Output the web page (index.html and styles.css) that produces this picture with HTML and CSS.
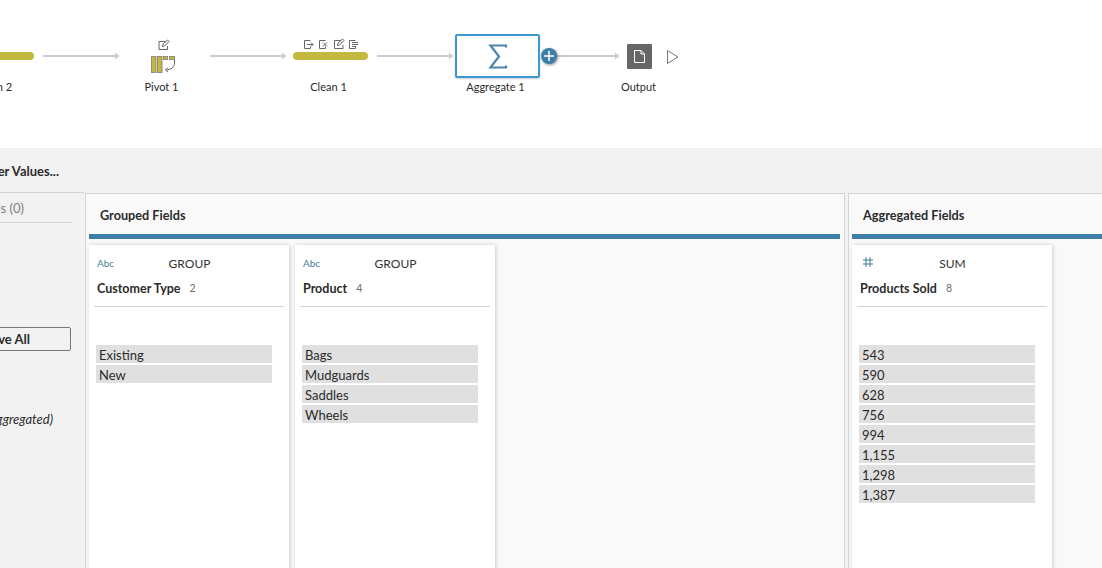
FILE: index.html
```html
<!DOCTYPE html>
<html lang="en">
<head>
<meta charset="utf-8">
<title>Aggregate 1</title>
<link rel="stylesheet" href="styles.css">
</head>
<body>
<section class="flow">
  <div class="yellow-bar bar-left"></div>
  <div class="node-label label-clip">Union 2</div>

  <svg class="canvas-lines" width="700" height="100" viewBox="0 0 700 100">
    <g class="link">
      <path d="M43 55H115V52.500L119.500 56L115 59.500V57H43z"/>
      <path d="M210 55H282V52.500L286.500 56L282 59.500V57H210z"/>
      <path d="M377 55H449V52.500L453.500 56L449 59.500V57H377z"/>
      <path d="M556 55H615V52.500L619.500 56L615 59.500V57H556z"/>
    </g>
    <g class="edit-icon">
      <path d="M165.500 41.500h-6.500v8h8.500v-3.500M162.500 46.500l.5-2.500 4.500-4 1.500 1.500-4.500 4.500z"/>
      <path d="M310.500 40.500h-6v8h6v-2M307 44.500h6M311 42.500l2 2-2 2"/>
      <path d="M325.500 40.500h-6v8h6v-2M323 42.500l4 4M327 42.500l-4 4"/>
      <path d="M340.500 40.500h-6v8h8.500v-3.500M337.500 45.500l.5-2.500 4.500-4 1.500 1.500-4.500 4.500z"/>
      <path d="M355.500 40.500h-6v8h6v-2M352 42.500h6M352 44.500h6M352 46.500h4"/>
    </g>
    <g class="pivot">
      <rect x="151.500" y="56.500" width="4.500" height="16"/>
      <rect x="157.500" y="56.500" width="4.500" height="16"/>
      <rect x="163.500" y="56.500" width="4" height="3"/>
      <rect x="169.500" y="56.500" width="5" height="3"/>
    </g>
    <path class="pivot-arrow" d="M174.500 60v3c0 4-3 6.500-8.500 7M168 67.500l-2.500 2.500 2.500 2"/>
    <path class="sigma" d="M506 47.500V45.500H490.500L499 56.500L490.500 67.500H506V65.500"/>
    <path class="play" d="M667.500 50.500V63.500L678 57z"/>
  </svg>

  <div class="node-label label-pivot">Pivot 1</div>
  <div class="yellow-bar bar-clean"></div>
  <div class="node-label label-clean">Clean 1</div>
  <div class="agg-box"></div>
  <div class="node-label label-agg">Aggregate 1</div>
  <div class="plus">
    <svg width="10" height="10" viewBox="0 0 10 10"><path d="M5 0V10M0 5H10"/></svg>
  </div>
  <div class="output">
    <svg width="11" height="13" viewBox="0 0 11 13"><path d="M.5.500H7L10.500 4V12.500H.5zM7 .5V4H10.500"/></svg>
  </div>
  <div class="node-label label-output">Output</div>
</section>

<div class="toolbar"><span class="toolbar-text">Filter Values...</span></div>

<main class="workspace">
  <aside class="side">
    <div class="side-head"><span>Additional Fields (0)</span></div>
    <button class="remove" type="button"><span>Remove All</span></button>
    <div class="side-note"><span>(Not aggregated)</span></div>
  </aside>

  <section class="panel panel-grouped">
    <h2 class="panel-title">Grouped Fields</h2>
    <div class="panel-rule"></div>
    <div class="cards">
      <article class="card">
        <div class="card-top"><span class="type">Abc</span><span class="op">GROUP</span></div>
        <div class="card-name"><b>Customer Type</b><span class="count">2</span></div>
        <div class="card-rule"></div>
        <ul class="values">
          <li>Existing</li><li>New</li>
        </ul>
      </article>
      <article class="card">
        <div class="card-top"><span class="type">Abc</span><span class="op">GROUP</span></div>
        <div class="card-name"><b>Product</b><span class="count">4</span></div>
        <div class="card-rule"></div>
        <ul class="values">
          <li>Bags</li><li>Mudguards</li><li>Saddles</li><li>Wheels</li>
        </ul>
      </article>
    </div>
  </section>

  <section class="panel panel-agg">
    <h2 class="panel-title">Aggregated Fields</h2>
    <div class="panel-rule"></div>
    <div class="cards">
      <article class="card">
        <div class="card-top">
          <svg class="type-num" width="10" height="10" viewBox="0 0 10 10"><path d="M3 0V10M7 0V10M0 3H10M0 7H10"/></svg>
          <span class="op">SUM</span>
        </div>
        <div class="card-name"><b>Products Sold</b><span class="count">8</span></div>
        <div class="card-rule"></div>
        <ul class="values">
          <li>543</li><li>590</li><li>628</li><li>756</li><li>994</li><li>1,155</li><li>1,298</li><li>1,387</li>
        </ul>
      </article>
    </div>
  </section>
</main>
</body>
</html>
```
FILE: styles.css
```css
* { box-sizing: border-box; }
html, body { margin: 0; height: 568px; overflow: hidden; }
body {
  width: 1102px;
  background: #f2f2f2;
  color: #2b2b2b;
  font-family: "Lato", "Open Sans", sans-serif;
  font-size: 13px;
}

/* flow canvas */
.flow { position: relative; height: 148px; background: #fff; overflow: hidden; }
.canvas-lines { position: absolute; left: 0; top: 0; }
.link path { fill: #ccc; }
.edit-icon path { fill: none; stroke: #666; stroke-width: 1; }
.pivot rect { fill: #c4b83e; stroke: #8f8f80; stroke-width: 1; }
.pivot-arrow { fill: none; stroke: #666; stroke-width: 1; }
.sigma { fill: none; stroke: #4a86ad; stroke-width: 2.200; }
.play { fill: #fff; stroke: #777; stroke-width: 1; }
.yellow-bar { position: absolute; top: 52px; height: 8px; background: #c4b83e; border-radius: 4px; }
.bar-left { left: -40px; width: 74px; }
.bar-clean { left: 293px; width: 75px; }
.node-label { position: absolute; top: 80px; font-size: 11px; line-height: 14px; transform: translateX(-50%); white-space: nowrap; }
.label-clip { left: -7px; }
.label-pivot { left: 161.500px; }
.label-clean { left: 328.500px; }
.label-agg { left: 495.500px; }
.label-output { left: 638.500px; }
.agg-box {
  position: absolute; left: 455px; top: 34px; width: 85px; height: 44px;
  border: 2px solid #3d97d3; border-radius: 2px; background: transparent;
  box-shadow: 0 1px 2px rgba(0,0,0,.2);
}
.plus {
  position: absolute; left: 541px; top: 48px; width: 16px; height: 16px;
  border-radius: 50%; background: #3c7ea8; box-shadow: 1px 1px 3px rgba(0,0,0,.45);
  display: flex; align-items: center; justify-content: center;
}
.plus path { stroke: #fff; stroke-width: 1.500; fill: none; }
.output {
  position: absolute; left: 627px; top: 44px; width: 25px; height: 25px;
  background: #666; border-radius: 1px;
  display: flex; align-items: center; justify-content: center;
}
.output path { fill: none; stroke: #fff; stroke-width: 1; }

/* toolbar */
.toolbar {
  height: 44px; width: 59px; overflow: hidden;
  display: flex; justify-content: flex-end; align-items: center;
  padding-top: 1px; white-space: nowrap;
}
.toolbar-text { font-weight: 700; font-size: 13px; flex: none; }

/* workspace */
.workspace { display: flex; height: 376px; }
.side {
  flex: 0 0 85px; width: 85px; overflow: hidden;
  border-top: 1px solid #d4d4d4;
  display: flex; flex-direction: column; align-items: flex-end;
  white-space: nowrap;
}
.side-head {
  width: 72px; margin-right: 13px; height: 30px; flex: none;
  border-bottom: 1px solid #d4d4d4; color: #7a7f85;
  display: flex; justify-content: flex-end; align-items: center;
  padding-right: 48px;
}
.side-head span { flex: none; }
.remove {
  margin: 104px 14px 0 0; width: 120px; height: 24px; flex: none;
  background: #f2f2f2; border: 1px solid #777; border-radius: 2px;
  font: 700 13px "Lato", sans-serif; color: #2b2b2b;
  display: flex; justify-content: flex-end; align-items: center; padding: 0 40px 0 0;
}
.side-note { margin: 60px 32px 0 0; font-style: italic; font-size: 13px; line-height: 16px; }

.panel {
  margin-top: 1px; background: #f9f9f9;
  border: 1px solid #d4d4d4; border-bottom: 0;
  padding: 0 4px 0 3px;
}
.panel-grouped { flex: 0 0 760px; margin-right: 3px; }
.panel-agg { flex: 1 1 auto; padding-right: 0; border-right: 0; }
.panel-title {
  margin: 0; height: 40px; padding-left: 11px;
  font-size: 12.700px; font-weight: 700; line-height: 43px;
}
.panel-rule { height: 5px; background: #3d7ea8; }
.cards { display: flex; gap: 6px; padding-top: 6px; }
.card {
  flex: 0 0 200px; height: 330px; background: #fff; padding: 8px 5px 0;
  box-shadow: 1px 0 4px rgba(0,0,0,.18);
}
.card-top {
  height: 20px; position: relative; text-align: center; line-height: 22px;
  font-size: 12px; padding-left: 1px;
}
.type { position: absolute; left: 3px; top: -1px; font-size: 10px; color: #4a8098; }
.type-num { position: absolute; left: 6px; top: 4px; }
.type-num path { fill: none; stroke: #3a7a94; stroke-width: 1; }
.op { color: #333; }
.card-name { height: 20px; margin-top: 5px; padding-left: 3px; line-height: 21px; display: flex; gap: 9px; }
.card-name b { font-size: 12.500px; font-weight: 700; }
.count { font-size: 10.500px; color: #6b6b6b; }
.card-rule { height: 1px; margin-top: 8px; background: #d4d4d4; }
.values {
  list-style: none; margin: 38px 0 0 2px; padding: 0; width: 176px;
  display: flex; flex-direction: column; gap: 2px;
}
.values li { height: 18px; line-height: 21px; padding-left: 3px; background: #e0e0e0; overflow: hidden; font-size: 13px; }
```
